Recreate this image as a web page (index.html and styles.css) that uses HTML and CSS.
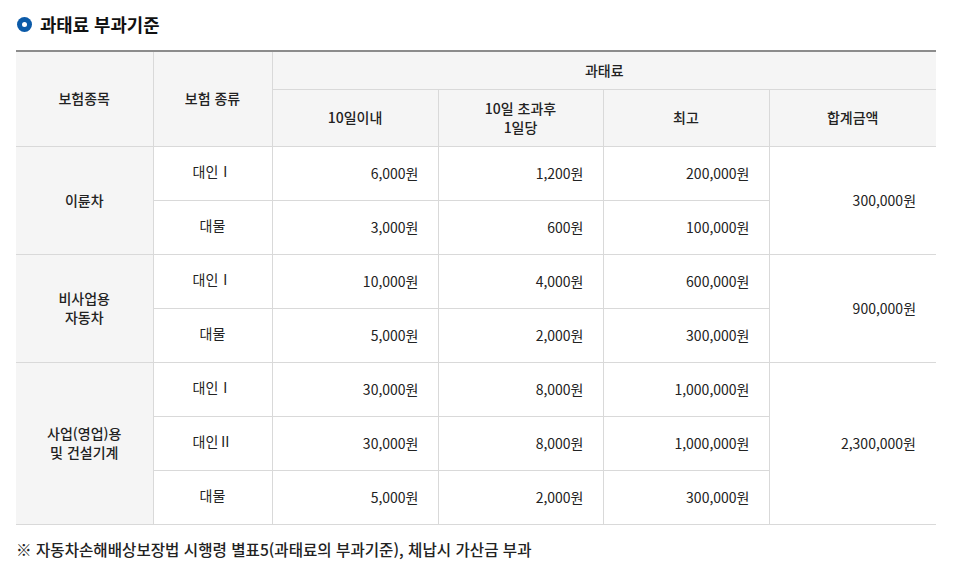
FILE: index.html
```html
<!DOCTYPE html>
<html lang="ko">
<head>
<meta charset="utf-8">
<link rel="stylesheet" href="styles.css">
</head>
<body>
<div class="wrap">
  <h3 class="title"><span class="dot"></span>과태료 부과기준</h3>
  <table class="fee">
    <colgroup>
      <col class="c1"><col class="c2"><col class="c3"><col class="c4"><col class="c5"><col class="c6">
    </colgroup>
    <thead>
      <tr class="h1">
        <th rowspan="2">보험종목</th>
        <th rowspan="2">보험 종류</th>
        <th colspan="4">과태료</th>
      </tr>
      <tr class="h2">
        <th>10일이내</th>
        <th>10일 초과후<br>1일당</th>
        <th>최고</th>
        <th>합계금액</th>
      </tr>
    </thead>
    <tbody>
      <tr>
        <th rowspan="2">이륜차</th>
        <td class="kind">대인Ⅰ</td>
        <td class="num">6,000원</td>
        <td class="num">1,200원</td>
        <td class="num">200,000원</td>
        <td class="sum" rowspan="2">300,000원</td>
      </tr>
      <tr>
        <td class="kind">대물</td>
        <td class="num">3,000원</td>
        <td class="num">600원</td>
        <td class="num">100,000원</td>
      </tr>
      <tr>
        <th rowspan="2">비사업용<br>자동차</th>
        <td class="kind">대인Ⅰ</td>
        <td class="num">10,000원</td>
        <td class="num">4,000원</td>
        <td class="num">600,000원</td>
        <td class="sum" rowspan="2">900,000원</td>
      </tr>
      <tr>
        <td class="kind">대물</td>
        <td class="num">5,000원</td>
        <td class="num">2,000원</td>
        <td class="num">300,000원</td>
      </tr>
      <tr>
        <th rowspan="3">사업(영업)용<br>및 건설기계</th>
        <td class="kind">대인Ⅰ</td>
        <td class="num">30,000원</td>
        <td class="num">8,000원</td>
        <td class="num">1,000,000원</td>
        <td class="sum" rowspan="3">2,300,000원</td>
      </tr>
      <tr>
        <td class="kind">대인Ⅱ</td>
        <td class="num">30,000원</td>
        <td class="num">8,000원</td>
        <td class="num">1,000,000원</td>
      </tr>
      <tr>
        <td class="kind">대물</td>
        <td class="num">5,000원</td>
        <td class="num">2,000원</td>
        <td class="num">300,000원</td>
      </tr>
    </tbody>
  </table>
  <p class="note">※ 자동차손해배상보장법 시행령 별표5(과태료의 부과기준), 체납시 가산금 부과</p>
</div>
</body>
</html>
```

FILE: styles.css
```css
* { box-sizing: border-box; }
html, body { margin: 0; padding: 0; background: #fff; }
body {
  font-family: "Noto Sans CJK KR", "Noto Sans", sans-serif;
  color: #222;
  font-size: 14px;
}
.wrap { padding: 10px 20px 0 16px; }
.title {
  display: flex;
  align-items: center;
  margin: 0 0 12px 0;
  font-size: 17.8px;
  font-weight: 700;
  line-height: 28px;
  color: #111;
  letter-spacing: 0;
}
.dot {
  width: 15px;
  height: 15px;
  border-radius: 50%;
  background: #0b5aa8;
  margin: 0 8px 0 1px;
  display: flex;
  align-items: center;
  justify-content: center;
}
.dot::after {
  content: "";
  width: 5px;
  height: 5px;
  border-radius: 50%;
  background: #fff;
}
.fee {
  width: 920px;
  border-collapse: collapse;
  table-layout: fixed;
  border-top: 2px solid #8c8c8c;
  border-bottom: 1px solid #d6d6d6;
}
.c1 { width: 137px; }
.c2 { width: 119px; }
.c3 { width: 166px; }
.c4 { width: 165px; }
.c5 { width: 166px; }
.c6 { width: 167px; }
.fee th, .fee td {
  border: 1px solid #d9d9d9;
  line-height: 19px;
  padding: 0;
  font-size: 14px;
}
.fee tr > :first-child { border-left: none; }
.fee tr > :last-child { border-right: none; }
.fee th {
  background: #f5f5f5;
  font-weight: 500;
  color: #222;
  text-align: center;
}
.h1 { height: 38px; }
.h2 { height: 57px; }
.fee tbody tr { height: 54px; }
.kind { text-align: center; padding-bottom: 4px !important; }
.num { text-align: right; padding-right: 19px !important; }
.sum { text-align: right; padding-right: 20px !important; border-right: none !important; }
.note {
  margin: 13px 0 0 0;
  font-size: 15.6px;
  font-weight: 500;
  color: #222;
  letter-spacing: 0;
}
```
